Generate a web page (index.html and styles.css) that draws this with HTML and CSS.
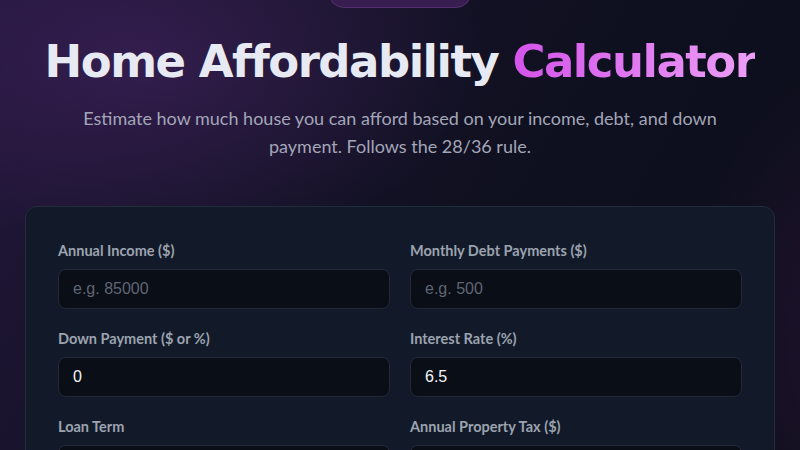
FILE: index.html
```html
<!DOCTYPE html>
<html lang="en">
<head>
<meta charset="utf-8">
<title>Home Affordability Calculator</title>
<link rel="stylesheet" href="styles.css">
</head>
<body>
<div class="page">
  <header class="hero">
    <div class="badge" aria-hidden="true"></div>
    <h1 class="title">Home Affordability <span class="accent">Calculator</span></h1>
    <p class="subtitle">Estimate how much house you can afford based on your income, debt, and down payment. Follows the 28/36 rule.</p>
  </header>
  <main class="card">
    <div class="grid">
      <div class="field">
        <label class="label">Annual Income ($)</label>
        <input class="input" type="text" placeholder="e.g. 85000">
      </div>
      <div class="field">
        <label class="label">Monthly Debt Payments ($)</label>
        <input class="input" type="text" placeholder="e.g. 500">
      </div>
      <div class="field">
        <label class="label">Down Payment ($ or %)</label>
        <input class="input" type="text" value="0">
      </div>
      <div class="field">
        <label class="label">Interest Rate (%)</label>
        <input class="input" type="text" value="6.5">
      </div>
      <div class="field">
        <label class="label">Loan Term</label>
        <input class="input" type="text" value="30 years">
      </div>
      <div class="field">
        <label class="label">Annual Property Tax ($)</label>
        <input class="input" type="text" placeholder="e.g. 3000">
      </div>
    </div>
  </main>
</div>
</body>
</html>
```
FILE: styles.css
```css
html, body {
  margin: 0;
  padding: 0;
}
body {
  min-height: 100vh;
  background:
    radial-gradient(ellipse 460px 260px at 140px 60px, rgba(70, 36, 100, 0.55), rgba(70, 36, 100, 0) 75%),
    radial-gradient(ellipse 240px 380px at 860px 330px, rgba(60, 24, 70, 0.45), rgba(60, 24, 70, 0) 70%),
    linear-gradient(120deg, #22163a 0%, #17132a 30%, #0f1020 55%, #0c0e1a 100%);
  font-family: "Lato", "Liberation Sans", sans-serif;
  color: #e5e7eb;
  overflow: hidden;
}
.page {
  display: flex;
  flex-direction: column;
  align-items: center;
}
.hero {
  display: flex;
  flex-direction: column;
  align-items: center;
}
.badge {
  margin-top: -24px;
  width: 144px;
  height: 32px;
  box-sizing: border-box;
  border: 1px solid #55306f;
  border-radius: 16px;
  background: #381e50;
}
.title {
  margin: 26px 0 0;
  font-family: "DejaVu Sans", sans-serif;
  font-weight: 700;
  font-size: 45px;
  line-height: 56px;
  color: #e8eaf3;
  letter-spacing: -1.5px;
  white-space: nowrap;
}
.accent {
  background: linear-gradient(90deg, #d453ea 0%, #ec9ff6 100%);
  -webkit-background-clip: text;
  background-clip: text;
  color: transparent;
}
.subtitle {
  margin: 14px 0 0;
  width: 680px;
  text-align: center;
  font-size: 18px;
  line-height: 28px;
  color: #a3a6b8;
}
.card {
  margin-top: 46px;
  width: 750px;
  box-sizing: border-box;
  padding: 34px 32px 32px;
  background: #121a29;
  border: 1px solid #232c3d;
  border-radius: 12px;
}
.grid {
  display: grid;
  grid-template-columns: 1fr 1fr;
  column-gap: 20px;
  row-gap: 20px;
}
.field {
  display: flex;
  flex-direction: column;
  gap: 8px;
}
.label {
  font-size: 14.5px;
  font-weight: 700;
  line-height: 20px;
  color: #9ca3af;
}
.input {
  height: 40px;
  box-sizing: border-box;
  padding: 0 14px;
  background: #0a0e17;
  border: 1px solid #222a3a;
  border-radius: 8px;
  color: #f3f4f6;
  font-family: "Liberation Sans", sans-serif;
  font-size: 16px;
  outline: none;
}
.input::placeholder {
  color: #5f6573;
}
```
